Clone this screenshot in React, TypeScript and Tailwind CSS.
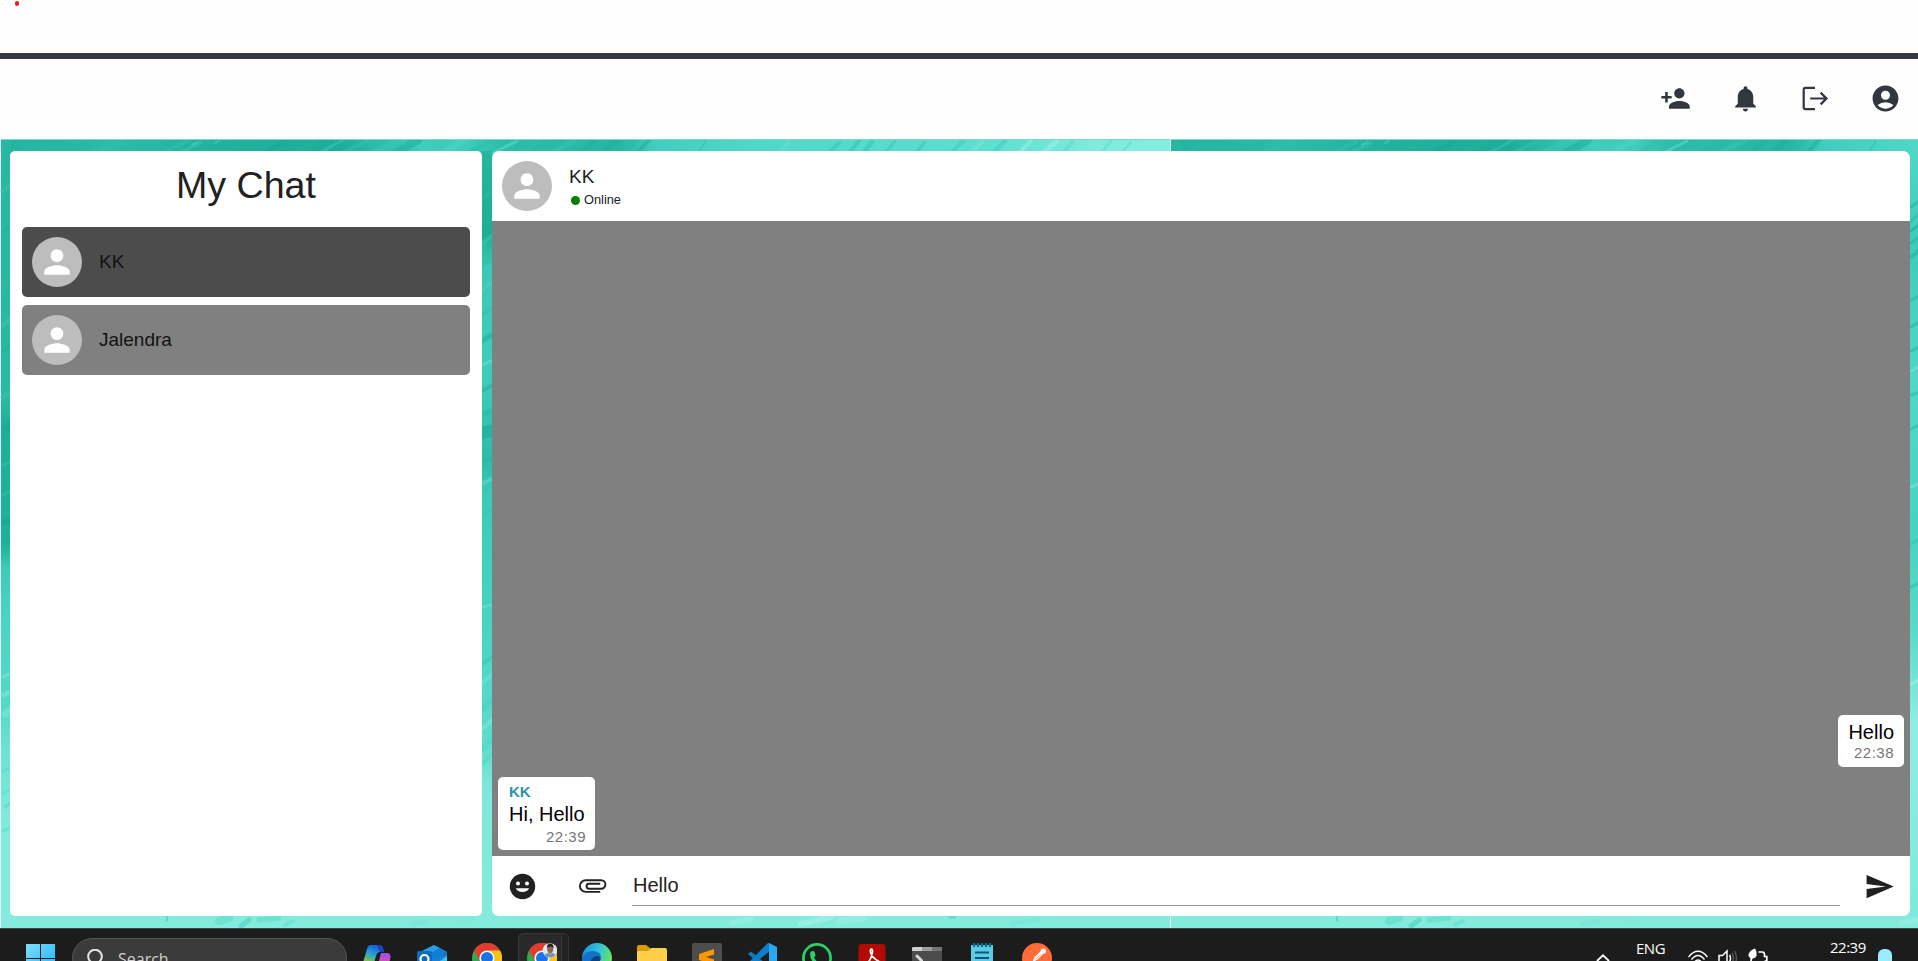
import React from "react";
import {
  MdAccountCircle,
  MdNotifications,
  MdPerson,
  MdPersonAdd,
  MdSend,
} from "react-icons/md";

/* Brush strokes of one backdrop tile: x, y, dx, dy, width, colour */
type Stroke = [number, number, number, number, number, string];

const strokes: Stroke[] = [
  [18, 12, 20, -9, 4, "#2cb9a5"], [60, 16, 30, -14, 5, "#27b7a2"], [92, 14, 30, -12, 6, "#2fbfaa"],
  [130, 14, 28, -12, 5, "#2abaa6"], [165, 12, 20, -9, 4, "#2fbfaa"], [192, 6, 5, -2, 3, "#5bd3c2"],
  [214, 4, 4, -2, 2, "#45cab8"], [178, 14, 22, -10, 3, "#38c3b0"], [225, 14, 26, -12, 4, "#25b49e"],
  [262, 14, 22, -12, 4, "#18aa94"], [292, 14, 22, -12, 5, "#23b39d"], [318, 14, 24, -13, 3, "#34c2ae"],
  [342, 14, 26, -13, 4, "#2fbfaa"], [372, 14, 22, -11, 6, "#3ac7b5"], [395, 14, 22, -13, 8, "#22b49f"],
  [440, 14, 24, -13, 6, "#4bd3c3"], [468, 14, 20, -12, 5, "#33c1ad"], [492, 14, 24, -12, 3, "#56d9ca"],
  [520, 14, 18, -12, 4, "#2fbfaa"], [550, 14, 24, -13, 5, "#35c5b1"], [580, 14, 14, -13, 5, "#22b39e"],
  [602, 14, 12, -12, 6, "#20b19c"], [622, 14, 12, -13, 5, "#2bbba7"], [636, 14, 12, -13, 4, "#22b39e"],
  [697, 14, 8, -12, 2, "#34c5b4"], [778, 14, 10, -11, 4, "#61dfd1"], [830, 12, 8, -8, 4, "#3ac9b8"],
  [848, 14, 10, -12, 4, "#38c6b5"], [862, 14, 9, -11, 5, "#3bcbb9"], [884, 14, 10, -12, 3, "#3fcbbb"],
  [915, 14, 8, -10, 4, "#3fcbbb"], [950, 14, 12, -12, 4, "#45d0c0"], [970, 14, 12, -12, 4, "#75e5d8"],
  [992, 14, 12, -12, 4, "#45d0c0"], [1018, 14, 12, -12, 4, "#8df0e5"], [1042, 14, 14, -12, 5, "#92f1e7"],
  [1062, 14, 10, -12, 4, "#60ddcf"], [1100, 14, 10, -12, 3, "#65e0d2"], [1122, 12, 8, -9, 2, "#62dccf"],
  [2, 52, 10, -8, 5, "#35c0ad"], [2, 92, 10, -5, 3, "#23b19d"], [2, 150, 10, -8, 4, "#2fbba8"],
  [2, 186, 10, -9, 4, "#3cc4b2"], [2, 212, 10, -8, 3, "#22b19c"], [2, 258, 10, -6, 5, "#35bfae"],
  [4, 288, 10, -4, 8, "#1aaa95"], [2, 326, 10, -4, 3, "#35bfad"], [2, 356, 10, -6, 3, "#33bda9"],
  [3, 384, 10, -5, 6, "#17a993"], [2, 538, 6, -3, 3, "#7fe9db"], [2, 556, 5, -2, 5, "#76e6d7"],
  [4, 575, 8, -5, 7, "#7be6da"], [2, 632, 10, -4, 3, "#5fdccc"], [2, 654, 8, -3, 3, "#67decf"],
  [4, 668, 7, -5, 3, "#60d6c7"], [2, 692, 9, -4, 3, "#65ddd0"],
  [481, 60, 11, -7, 5, "#2bb7a2"], [481, 82, 11, -8, 4, "#22ad99"], [481, 105, 11, -9, 4, "#38c4b1"],
  [481, 126, 11, -10, 4, "#30bca8"], [481, 151, 11, -9, 4, "#47d0bf"], [481, 176, 11, -8, 4, "#36c0ae"],
  [481, 202, 11, -7, 5, "#24b7a2"], [481, 226, 11, -5, 3, "#65dfce"], [481, 252, 11, -6, 4, "#28b39e"],
  [481, 276, 11, -5, 5, "#2cbaa6"], [481, 294, 11, -3, 12, "#20ae9b"], [481, 322, 11, -2, 3, "#27b7a5"],
  [481, 345, 11, -6, 4, "#59d9c9"], [481, 376, 11, -6, 3, "#37c6b5"], [481, 468, 11, -2, 3, "#64e0d1"],
  [481, 525, 11, -8, 4, "#38cab8"], [481, 544, 11, -9, 4, "#6ee5d7"], [481, 570, 11, -9, 5, "#49d1c0"],
  [481, 590, 11, -10, 4, "#78e8db"], [481, 610, 11, -10, 5, "#50d6c6"], [481, 625, 11, -10, 4, "#57d8c8"],
  [740, 68, 10, -7, 3, "#25b7a2"], [740, 82, 10, -9, 3, "#2ebaa7"], [740, 92, 10, -8, 3, "#1eb19c"],
  [740, 104, 10, -7, 3, "#2cbba7"], [740, 118, 10, -8, 4, "#28b7a3"], [740, 161, 10, -5, 3, "#2ebca9"],
  [740, 188, 10, -6, 3, "#29b6a3"], [740, 212, 10, -5, 3, "#2dbaa8"], [740, 232, 10, -6, 2, "#7ce6db"],
  [740, 256, 10, -3, 3, "#33c0ad"], [740, 290, 10, -5, 3, "#35c0ad"], [740, 348, 10, -4, 3, "#73e3d7"],
  [740, 405, 10, -6, 3, "#37c8b6"], [740, 448, 10, -5, 3, "#34c0af"], [740, 508, 10, -4, 3, "#61dccd"],
  [740, 545, 10, -5, 3, "#a0f0e7"],
  [166, 782, 0, -5, 2, "#4ccfbf"], [218, 782, 10, -3, 8, "#62dccf"],
  [240, 787, 8, -6, 5, "#50d3c3"], [258, 781, 20, -2, 5, "#62dccd"], [284, 786, 8, -4, 4, "#68dfd1"],
  [412, 785, 14, -3, 5, "#7be6db"], [456, 784, 18, -4, 4, "#81e9dd"], [730, 784, 20, -4, 5, "#9af1e6"],
  [800, 785, 30, -7, 6, "#a3f2e8"], [838, 782, 24, -3, 7, "#9cf0e6"], [949, 778, 5, 0, 3, "#5dcfc0"],
  [1010, 785, 28, -5, 4, "#76e7d9"],
];

function Tile({ x }: { x: number }) {
  return (
    <g transform={`translate(${x} 0)`}>
      <rect width="1169" height="789" fill="url(#sea)" />
      <rect width="1169" height="14" fill="url(#crest)" />
      <rect width="10" height="765" fill="url(#shore)" />
      <rect x="480" y="12" width="13" height="765" fill="url(#reef)" />
      <rect x="738" y="12" width="12" height="765" fill="url(#bay)" />
      <g strokeLinecap="round" opacity="0.65">
        {strokes.map(([sx, sy, dx, dy, w, c], i) => (
          <line key={i} x1={sx} y1={sy} x2={sx + dx} y2={sy + dy} stroke={c} strokeWidth={w} />
        ))}
      </g>
      <rect width="1169" height="1" fill="#7ed6c9" />
    </g>
  );
}

function Backdrop() {
  return (
    <svg className="absolute inset-0 h-full w-full" viewBox="0 0 1918 789" preserveAspectRatio="none" aria-hidden="true">
      <defs>
        <linearGradient id="sea" x1="0" y1="0" x2="0" y2="1">
          <stop offset="0" stopColor="#20b29c" />
          <stop offset="0.55" stopColor="#48d1c0" />
          <stop offset="0.85" stopColor="#7fe9dc" />
          <stop offset="1" stopColor="#84ebdd" />
        </linearGradient>
        <linearGradient id="crest">
          <stop offset="0" stopColor="#22b49e" />
          <stop offset="0.1" stopColor="#2bbba7" />
          <stop offset="0.2" stopColor="#1fb19b" />
          <stop offset="0.29" stopColor="#1cae98" />
          <stop offset="0.36" stopColor="#3fcdbc" />
          <stop offset="0.4" stopColor="#3ecbba" />
          <stop offset="0.43" stopColor="#2cbca8" />
          <stop offset="0.53" stopColor="#27b6a2" />
          <stop offset="0.56" stopColor="#41cebe" />
          <stop offset="0.64" stopColor="#4fd7c7" />
          <stop offset="0.85" stopColor="#5ddfd1" />
          <stop offset="0.93" stopColor="#7feadd" />
          <stop offset="1" stopColor="#84eee1" />
        </linearGradient>
        <linearGradient id="shore" x1="0" y1="0" x2="0" y2="1">
          <stop offset="0" stopColor="#27b7a3" />
          <stop offset="0.34" stopColor="#2ab9a5" />
          <stop offset="0.38" stopColor="#1caf99" />
          <stop offset="0.53" stopColor="#1fb19b" />
          <stop offset="0.56" stopColor="#3ccbb9" />
          <stop offset="0.62" stopColor="#4ad3c3" />
          <stop offset="0.74" stopColor="#55d8c9" />
          <stop offset="0.8" stopColor="#6ee2d5" />
          <stop offset="0.9" stopColor="#82ebde" />
          <stop offset="1" stopColor="#84ecdf" />
        </linearGradient>
        <linearGradient id="reef" x1="0" y1="0" x2="0" y2="1">
          <stop offset="0" stopColor="#26b6a1" />
          <stop offset="0.11" stopColor="#1cae98" />
          <stop offset="0.15" stopColor="#3bc8b6" />
          <stop offset="0.3" stopColor="#3fccbb" />
          <stop offset="0.4" stopColor="#2cbba8" />
          <stop offset="0.45" stopColor="#3bcbb9" />
          <stop offset="0.65" stopColor="#4bd5c4" />
          <stop offset="0.78" stopColor="#5fdccf" />
          <stop offset="0.83" stopColor="#7ce8db" />
          <stop offset="1" stopColor="#84ebdd" />
        </linearGradient>
        <linearGradient id="bay" x1="0" y1="0" x2="0" y2="1">
          <stop offset="0" stopColor="#4fd7c7" />
          <stop offset="0.12" stopColor="#3ecbba" />
          <stop offset="0.3" stopColor="#4fd8c8" />
          <stop offset="0.5" stopColor="#46d3c1" />
          <stop offset="0.63" stopColor="#5adacb" />
          <stop offset="0.75" stopColor="#8feee2" />
          <stop offset="1" stopColor="#7ee9dc" />
        </linearGradient>
      </defs>
      <rect width="1918" height="789" fill="#e8fbf8" />
      <Tile x={1} />
      <Tile x={1171} />
      <rect x="1170" width="1" height="789" fill="#e8fbf8" />
    </svg>
  );
}

function LogoutIcon() {
  return (
    <svg width="31" height="31" viewBox="0 0 31 31" fill="none" stroke="currentColor" strokeWidth="2.2">
      <path d="M15 4.900H5.500Q3.700 4.900 3.700 6.700V24.300Q3.700 26.100 5.500 26.100H15" />
      <path d="M10.200 15.500H26.500M20.600 9.600L26.500 15.500 20.600 21.400" />
    </svg>
  );
}

function SmileIcon() {
  return (
    <svg width="31" height="31" viewBox="0 0 31 31">
      <circle cx="15.500" cy="15.500" r="12.700" fill="currentColor" />
      <circle cx="11" cy="12.400" r="2" fill="#fff" />
      <circle cx="20" cy="12.400" r="2" fill="#fff" />
      <path d="M8.900 17.200H22.100A7 5.600 0 0 1 8.900 17.200Z" fill="#fff" />
    </svg>
  );
}

function ClipIcon() {
  return (
    <svg width="31" height="24" viewBox="0 0 31 24" fill="none" stroke="currentColor" strokeWidth="1.900">
      <path d="M23.200 17.900H8.700A5.800 5.800 0 0 1 8.700 6.300H24.200A4.200 4.200 0 0 1 24.200 14.700H12A2.450 2.450 0 0 1 12 9.800H23.200" />
    </svg>
  );
}

function Avatar() {
  return (
    <span className="flex size-[50px] shrink-0 items-center justify-center rounded-full bg-[#bdbdbd] text-white">
      <MdPerson size={38} />
    </span>
  );
}

function ChatRow({ name, className }: { name: string; className: string }) {
  return (
    <li className={`flex h-[70px] items-center gap-[17px] rounded-[5px] pl-2.5 ${className}`}>
      <Avatar />
      <span className="text-[19px] leading-6 text-[#121212]">{name}</span>
    </li>
  );
}

function Sidebar() {
  return (
    <aside className="flex w-[472px] shrink-0 flex-col rounded-[5px] bg-white px-3">
      <h1 className="h-[76px] pt-[11px] text-center text-[37.6px] leading-[46px] text-[#212121]">My Chat</h1>
      <ul className="flex flex-col gap-2">
        <ChatRow name="KK" className="bg-[#4c4c4c]" />
        <ChatRow name="Jalendra" className="bg-[#808080]" />
      </ul>
    </aside>
  );
}

function Conversation() {
  return (
    <section className="flex w-[1418px] shrink-0 flex-col overflow-hidden rounded-[7px] bg-white">
      <header className="flex h-[70px] shrink-0 items-center gap-[17px] pl-2.5">
        <Avatar />
        <div className="pt-[3px]">
          <div className="text-[19px] leading-6 text-[#212121]">KK</div>
          <div className="flex items-center gap-1 pl-0.5 text-[12.8px] leading-[22px] text-[#212121]">
            <span className="mt-px size-[9px] rounded-full bg-[#008000]" />
            Online
          </div>
        </div>
      </header>
      <div className="flex flex-1 flex-col justify-end gap-2.5 bg-[#808080] p-1.5">
        <div className="flex h-[52px] w-[66px] flex-col items-end self-end rounded-[5px] bg-white pt-[5px] pr-2.5">
          <p className="text-[20px] leading-6 text-black">Hello</p>
          <time className="text-[15px] leading-[18px] tracking-[0.5px] text-[#757575]">22:38</time>
        </div>
        <div className="flex h-[73px] w-[97px] flex-col rounded-[5px] bg-white pt-[5px] pr-[9px] pl-[11px]">
          <b className="text-[15px] leading-[19px] font-bold text-[#2694ab]">KK</b>
          <p className="text-[20px] leading-[27px] whitespace-nowrap text-black">Hi, Hello</p>
          <time className="self-end text-[15px] leading-[17px] tracking-[0.5px] text-[#757575]">22:39</time>
        </div>
      </div>
      <footer className="flex h-[60px] shrink-0 items-center pr-[15px] pl-[14.5px] text-[#212121]">
        <SmileIcon />
        <div className="ml-[39.5px]">
          <ClipIcon />
        </div>
        <div className="mt-2 ml-[24px] h-[42px] w-[1208px] self-start border-b border-[#949494] pt-[8px] pl-px text-[20px] leading-[26px]">
          Hello
        </div>
        <MdSend size={31} className="ml-auto" />
      </footer>
    </section>
  );
}

function ChromeArt() {
  return (
    <>
      <circle cx="15" cy="15" r="15" fill="#33a852" />
      <path d="M2 7.5A15 15 0 0 1 28 7.5L15 8.5 8.5 19Z" fill="#e33b2e" />
      <path d="M28 7.5H15A7.5 7.5 0 0 1 21.5 18.8L15 30A15 15 0 0 0 28 7.5Z" fill="#fbc116" />
      <circle cx="15" cy="15" r="7.6" fill="#fff" />
      <circle cx="15" cy="15" r="6" fill="#1a73e8" />
    </>
  );
}

const apps: { name: string; art: React.ReactNode }[] = [
  {
    name: "copilot",
    art: (
      <>
        <defs>
          <linearGradient id="cpA" x1="0.3" y1="0" x2="0" y2="1">
            <stop offset="0" stopColor="#1766d6" />
            <stop offset="0.35" stopColor="#2a9fd8" />
            <stop offset="0.6" stopColor="#5fb66b" />
            <stop offset="1" stopColor="#f1c91c" />
          </linearGradient>
          <linearGradient id="cpB" x1="0" y1="0" x2="0" y2="1">
            <stop offset="0" stopColor="#a34ee8" />
            <stop offset="0.6" stopColor="#e34fa8" />
            <stop offset="1" stopColor="#ff8a5c" />
          </linearGradient>
        </defs>
        <path d="M9 2H18Q20 2 21 5L22 9H18Q15 9 14 13L11 24H6Q0 24 2 16L5 6Q6 2 9 2Z" fill="url(#cpA)" />
        <path d="M15 2H18Q20 2 21 5L22 9H18Z" fill="#1c42c0" />
        <path d="M19 10H25Q30 10 28 17L25 27Q24 30 20 30H13L16 22Z" fill="url(#cpB)" />
      </>
    ),
  },
  {
    name: "outlook",
    art: (
      <>
        <path d="M3 9L17 2 30 9V30H6Z" fill="#0f6cbd" />
        <path d="M3 9L17 2 23 5 10 13Z" fill="#2a9be8" />
        <path d="M11 12L23 5 30 9 16 19Z" fill="#0f7fd6" />
        <path d="M14 17L30 11V30H14Z" fill="#1b7fd4" />
        <path d="M20 20L30 13V28Z" fill="#39c2f3" />
        <rect x="0" y="8" width="15" height="17" rx="2" fill="#0f6cbd" />
        <circle cx="7.5" cy="16" r="4" fill="none" stroke="#fff" strokeWidth="2.2" />
      </>
    ),
  },
  { name: "chrome", art: <ChromeArt /> },
  {
    name: "chrome-profile",
    art: (
      <>
        <ChromeArt />
        <circle cx="23" cy="7.5" r="7.3" fill="#dfe7ee" />
        <path d="M20 5Q20 2 23 2T26.500 5L26 8Q24.500 10.500 23 10.500T20.500 8Z" fill="#8a6552" />
        <path d="M20 5Q19.500 1 23 0.800T26.800 5L25.500 3.800H21Z" fill="#222" />
        <path d="M17 12Q19.500 10 21.500 9.800L23 11 25 9.800Q27.500 10 28.500 12Q23.500 17 17 12Z" fill="#7397b3" />
      </>
    ),
  },
  {
    name: "edge",
    art: (
      <>
        <defs>
          <linearGradient id="edA" x1="0" y1="0.2" x2="1" y2="0.5">
            <stop offset="0" stopColor="#1b8fe0" />
            <stop offset="0.5" stopColor="#2fc2dd" />
            <stop offset="1" stopColor="#6be25b" />
          </linearGradient>
        </defs>
        <circle cx="15" cy="15" r="15" fill="url(#edA)" />
        <path d="M0 15Q3 8 11 8Q19 8 19 15Q19 17 17 19L16 30Q0 30 0 15Z" fill="#1272c9" />
        <path d="M8 30Q6 14 15 13Q19 13 18 17L16 22 28 24V30Z" fill="#103f7a" />
      </>
    ),
  },
  {
    name: "files",
    art: (
      <>
        <path d="M0 4Q0 2 2 2H9L13 5V10H0Z" fill="#dc9a06" />
        <path d="M0 9Q0 8 1 8H11L14 5H28Q30 5 30 7V30H0Z" fill="#ffcf48" />
      </>
    ),
  },
  {
    name: "sublime",
    art: (
      <>
        <rect width="30" height="36" rx="1.5" fill="#4d4d4d" />
        <path d="M7 11L22 6V11.500L14 14 22 16.500V22L7 17Z" fill="#ff9800" />
      </>
    ),
  },
  {
    name: "vscode",
    art: (
      <>
        <path d="M1 11L4 8.500 23 24 22 30Z" fill="#0a7cc4" />
        <path d="M1 20L21 0 23 0.500V8L5 22Z" fill="#0e7fca" />
        <path d="M22 0L30 4V30H22Z" fill="#28a8f0" />
      </>
    ),
  },
  {
    name: "whatsapp",
    art: (
      <>
        <circle cx="15" cy="15" r="13.600" fill="none" stroke="#25d366" strokeWidth="2.700" />
        <path d="M10 8Q12 7.500 12.500 9L13.500 12Q13.500 13 12 14.500Q14 18.500 18 20L22 22Q19 24 15 22Q8 18 8 11Q8 9 10 8Z" fill="#25d366" />
      </>
    ),
  },
  {
    name: "acrobat",
    art: (
      <>
        <rect x="1.500" y="1" width="27" height="34" rx="3" fill="#b30b00" />
        <path d="M14.500 6Q13 6 13.500 9Q14 14 22 18.500Q25 20.500 23 21.500Q19 20 8 22.500Q14 18 15.500 9Q15.500 6 14.500 6Z" fill="none" stroke="#fff" strokeWidth="1.700" />
      </>
    ),
  },
  {
    name: "terminal",
    art: (
      <>
        <rect y="4" width="30" height="30" rx="1" fill="#4c4c4c" />
        <path d="M1 4H10V8H0V5Z" fill="#cfcfcf" />
        <rect x="10" y="4" width="10" height="4" fill="#9d9d9d" />
        <rect x="20" y="4" width="10" height="4" fill="#747474" />
        <path d="M5 13L9.500 17.500V22" fill="none" stroke="#d8d8d8" strokeWidth="3" strokeLinecap="round" />
      </>
    ),
  },
  {
    name: "notepad",
    art: (
      <>
        <rect x="4" y="2" width="22" height="30" fill="#5ccbe3" />
        <path d="M7 1V3M11 1V3M15 1V3M19 1V3M23 1V3" stroke="#0b6f94" strokeWidth="2.400" strokeLinecap="round" />
        <path d="M8 9.500H22M8 15H22" stroke="#075b78" strokeWidth="1.800" />
      </>
    ),
  },
  {
    name: "postman",
    art: (
      <>
        <circle cx="15" cy="15" r="15" fill="#ff6c37" />
        <path d="M10 19.500L13 13.500 18.500 8.500 21 11 15.500 16.500Z" fill="#fff" />
        <circle cx="21.300" cy="8.300" r="2.700" fill="#fff" />
        <path d="M19 11L13 17" stroke="#ff9c78" strokeWidth="0.800" />
      </>
    ),
  },
];

function Taskbar() {
  return (
    <nav className="flex h-[33px] shrink-0 items-start overflow-hidden border-t border-[#444] bg-[#1c1c1c] font-['Open_Sans','Noto_Sans',sans-serif]">
      <svg className="mt-[15px] ml-[26px] shrink-0" width="29" height="30" viewBox="0 0 29 30">
        <defs>
          <linearGradient id="win" x1="0" y1="0" x2="1" y2="1">
            <stop offset="0" stopColor="#80dcff" />
            <stop offset="0.700" stopColor="#34c0fc" />
          </linearGradient>
        </defs>
        <path d="M0 0H14V14H0ZM15 0H29V14H15ZM0 15H14V29H0ZM15 15H29V29H15Z" fill="url(#win)" />
      </svg>
      <div className="mt-[9px] ml-[17px] flex h-10 w-[275px] shrink-0 items-start rounded-full border border-[#565656] bg-[#3b3b3b] pl-[14px]">
        <svg className="mt-[10px]" width="20" height="20" viewBox="0 0 20 20" fill="none" stroke="#e3e3e3" strokeWidth="2">
          <circle cx="8" cy="7.500" r="6.800" />
          <path d="M3.500 12.500L0 17" />
        </svg>
        <span className="mt-[8px] ml-[11px] text-[16px] leading-6 text-[#cfcfcf]">Search</span>
      </div>
      <div className="ml-[2.5px] flex">
        {apps.map((app) => (
          <div key={app.name} className="relative flex w-[55px] justify-center pt-[14px]">
            {app.name === "chrome-profile" && (
              <>
                <span className="absolute top-1 left-[12px] h-12 w-[42px] rounded-[5px] border border-[#343434] bg-[#232323]" />
                <span className="absolute top-1 left-[3px] h-12 w-[44px] rounded-[5px] border border-[#3a3a3a] bg-[#292929]" />
              </>
            )}
            <svg className="relative" width="30" height="30" viewBox="0 0 30 30">{app.art}</svg>
          </div>
        ))}
      </div>
      <div className="ml-auto flex items-start text-white">
        <svg className="mt-[25px]" width="14" height="10" viewBox="0 0 14 10" fill="none" stroke="#fff" strokeWidth="1.800">
          <path d="M1 7L7 1.300 13 7" />
        </svg>
        <span className="ml-[26px] w-[30px] pt-[8px] text-[15px] leading-[22px] tracking-[-0.5px]">ENG</span>
        <svg className="mt-[21px] ml-[22px]" width="20" height="16" viewBox="0 0 20 16" fill="none" stroke="#fff" strokeWidth="1.500">
          <path d="M0.500 7Q10 -4.500 19.500 7M3.500 9.500Q10 1.500 16.500 9.500M6.500 12Q10 8 13.500 12" />
        </svg>
        <svg className="mt-[20px] ml-[10px]" width="20" height="18" viewBox="0 0 20 18" fill="none" stroke="#fff" strokeWidth="1.500">
          <path d="M1 6.500H4.500L9 2V17L4.500 13H1Z" />
          <path d="M11.500 6Q13.500 9 11.500 13" />
          <path d="M14 4Q17 9 14 15M16.500 2Q20.500 9 16.500 16" stroke="#555" />
        </svg>
        <svg className="mt-[19px] ml-[10px]" width="20" height="18" viewBox="0 0 20 18">
          <path d="M7 0.500Q0 3 0.500 8L2.500 10.500 2 14H3.500L4.500 10.500Q9.500 10 8.500 5Q8.500 2 7 0.500Z" fill="#fff" />
          <path d="M10.500 4H14Q16.500 4 16.500 6.500V8.500H18.800V13H16.500" fill="none" stroke="#fff" strokeWidth="1.700" />
        </svg>
        <time className="ml-[62px] w-[38px] pt-[7px] text-[15px] leading-[22px] tracking-[-0.5px]">22:39</time>
        <span className="mt-[20px] mr-[26px] ml-[10px] h-6 w-[14px] rounded-t-[6px] bg-[#99ebff]" />
      </div>
    </nav>
  );
}

export default function App() {
  return (
    <div className="flex h-[961px] w-[1918px] flex-col overflow-hidden bg-[#fefefe] font-['Liberation_Sans',Arial,sans-serif]">
      <div className="h-[53px] shrink-0 pl-[15px]">
        <span className="mt-px block h-[5px] w-[4px] rounded-full bg-[#f01818]" />
      </div>
      <header className="flex h-[86px] shrink-0 items-center justify-end gap-[39px] border-t-[6px] border-[#383b45] pr-[17.5px] pb-px text-[#31363f]">
        <MdPersonAdd size={31} />
        <MdNotifications size={31} />
        <LogoutIcon />
        <MdAccountCircle size={31} />
      </header>
      <main className="relative h-[789px] shrink-0">
        <Backdrop />
        <div className="relative flex h-full gap-2.5 py-3 pr-2 pl-2.5">
          <Sidebar />
          <Conversation />
        </div>
      </main>
      <Taskbar />
    </div>
  );
}
